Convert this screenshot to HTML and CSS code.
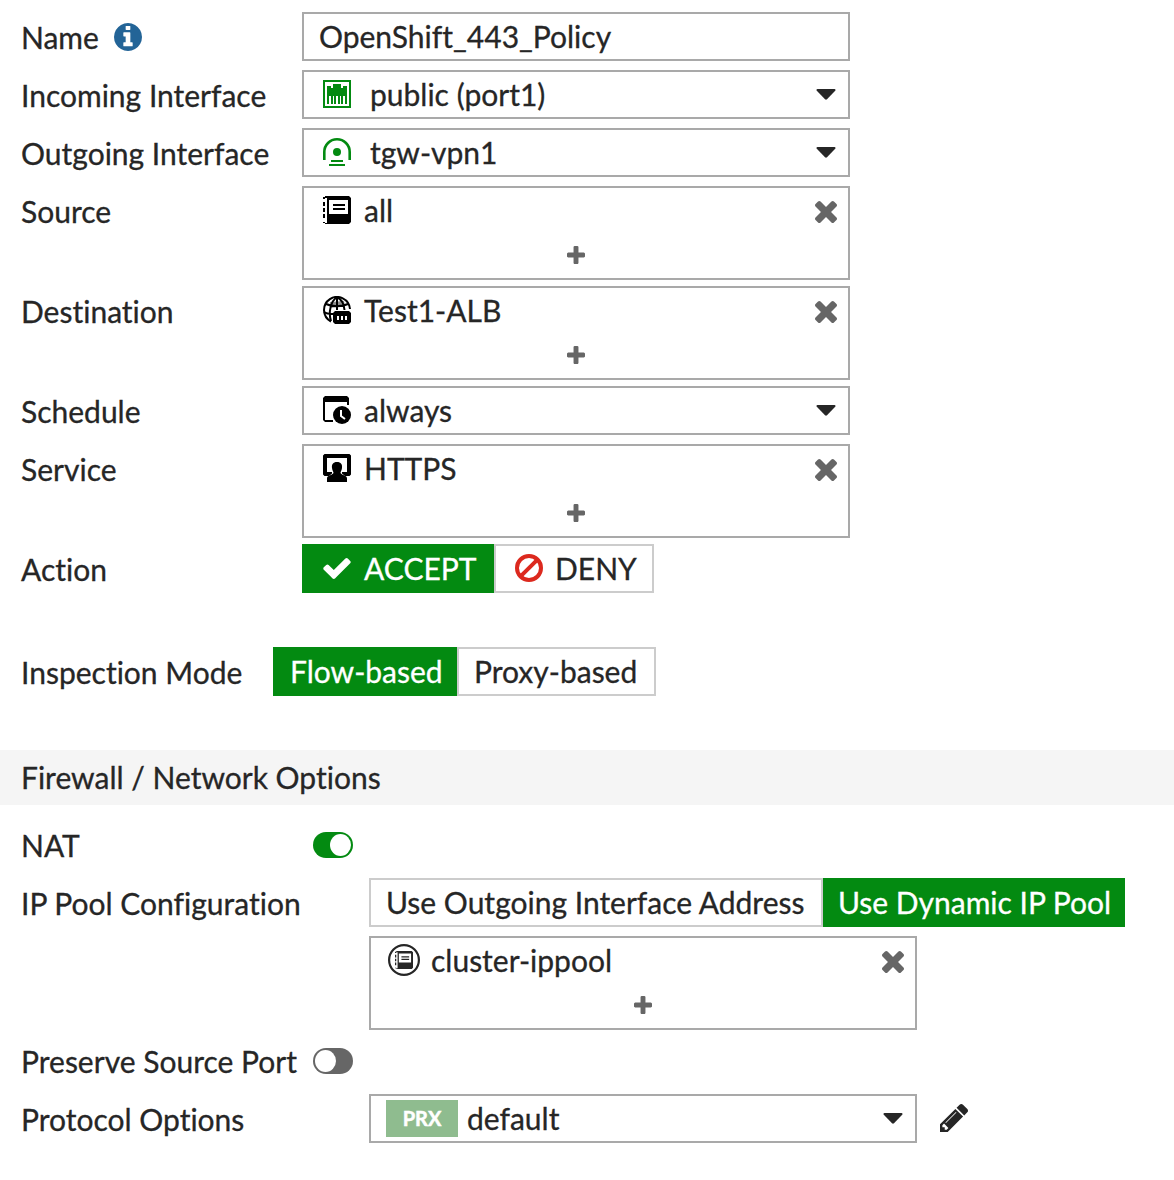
FILE: index.html
```html
<!DOCTYPE html>
<html lang="en">
<head>
<meta charset="utf-8">
<title>Firewall Policy</title>
<link rel="stylesheet" href="styles.css">
</head>
<body>
<svg class="sprite" aria-hidden="true">
  <symbol id="times" viewBox="302 366 1188 1188"><path d="M1490 1322q0 40-28 68l-136 136q-28 28-68 28t-68-28l-294-294-294 294q-28 28-68 28t-68-28l-136-136q-28-28-28-68t28-68l294-294-294-294q-28-28-28-68t28-68l136-136q28-28 68-28t68 28l294 294 294-294q28-28 68-28t68 28l136 136q28 28 28 68t-28 68l-294 294 294 294q28 28 28 68z"/></symbol>
  <symbol id="plus" viewBox="192 128 1408 1408"><path d="M1600 736v192q0 40-28 68t-68 28h-416v416q0 40-28 68t-68 28h-192q-40 0-68-28t-28-68v-416h-416q-40 0-68-28t-28-68v-192q0-40 28-68t68-28h416v-416q0-40 28-68t68-28h192q40 0 68 28t28 68v416h416q40 0 68 28t28 68z"/></symbol>
  <symbol id="caret" viewBox="0 0 20 11"><path d="M1.500 0h17q1.600.400.700 1.800L11 10.200q-1 .900-2 0L.800 1.800Q-.100.400 1.500 0z"/></symbol>
  <symbol id="book" viewBox="0 0 28 28"><path fill-rule="evenodd" d="M2 0h24l2 2v24l-2 2H2v-1H0v-1h2v1h2V2H2v1H0V1h2zM6 4v14h19V4z"/><path d="M0 6h2v4H0zM0 12h2v4H0zM0 18h2v4H0zM10 8h12v2H10zM10 12h12v2H10z"/></symbol>
</svg>
<main class="form">
  <div class="row">
    <div class="label">Name <svg class="info" viewBox="128 128 1536 1536"><path d="M1152 1376v-160q0-14-9-23t-23-9h-96v-512q0-14-9-23t-23-9h-320q-14 0-23 9t-9 23v160q0 14 9 23t23 9h96v320h-96q-14 0-23 9t-9 23v160q0 14 9 23t23 9h448q14 0 23-9t9-23zm-128-896v-160q0-14-9-23t-23-9h-192q-14 0-23 9t-9 23v160q0 14 9 23t23 9h192q14 0 23-9t9-23zm640 416q0 209-103 385.500t-279.500 279.500-385.500 103-385.500-103-279.500-279.500-103-385.500 103-385.500 279.500-279.500 385.500-103 385.500 103 279.500 279.500 103 385.500z"/></svg></div>
    <div class="field plain">OpenShift_443_Policy</div>
  </div>
  <div class="row">
    <div class="label">Incoming Interface</div>
    <div class="field iface">
      <svg class="icon green" viewBox="0 0 28 28"><path fill-rule="evenodd" d="M0 0h28v28H0zM2 2v24h24V2z"/><path d="M4 6h4v2h2V4h8v4h2V6h4v10H4zM4 16h2v8H4zM8 16h2v8H8zM11 16h2v8h-2zM15 16h2v8h-2zM18 16h2v8h-2zM22 16h2v8h-2z"/></svg>
      <span>public (port1)</span><svg class="caret"><use href="#caret"/></svg>
    </div>
  </div>
  <div class="row">
    <div class="label">Outgoing Interface</div>
    <div class="field iface">
      <svg class="icon green" viewBox="0 0 28 28"><path fill="none" stroke="currentColor" stroke-width="2.600" d="M1.300 22v-8a12.700 12.700 0 0 1 25.400 0v8"/><path d="M8 22h12v2H8zM6 26h16v2H6z"/><circle cx="14" cy="14" r="4"/></svg>
      <span>tgw-vpn1</span><svg class="caret"><use href="#caret"/></svg>
    </div>
  </div>
  <div class="row tall">
    <div class="label">Source</div>
    <div class="field multi">
      <div class="entry"><svg class="icon"><use href="#book"/></svg><span>all</span><svg class="times"><use href="#times"/></svg></div>
      <svg class="plus"><use href="#plus"/></svg>
    </div>
  </div>
  <div class="row tall">
    <div class="label">Destination</div>
    <div class="field multi">
      <div class="entry">
        <svg class="icon" viewBox="0 0 28 28"><g fill="none" stroke="currentColor" stroke-width="2"><path d="M8 25.500A13 13 0 1 1 27 13"/><path d="M8 25C5 16 8 5 14 1M14 1c4 2 7 7 7.500 13M14 1v13M3 8c6 3 16 3 22 0M1 16c2 1.500 5 2 9 2"/></g><path d="M7 6l14-1 1 5-15 2z" opacity=".45"/><path fill-rule="evenodd" d="M12 15h14l2 2v9l-2 2H12l-2-2v-9zM14 20v4h2v-4zm4 0v4h2v-4zm4 0v4h2v-4z"/></svg>
        <span>Test1-ALB</span><svg class="times"><use href="#times"/></svg>
      </div>
      <svg class="plus"><use href="#plus"/></svg>
    </div>
  </div>
  <div class="row">
    <div class="label">Schedule</div>
    <div class="field">
      <svg class="icon" viewBox="0 0 28 28"><path d="M2 0h22l2 2v7h-2V6H2v18h8v2H2l-2-2V2z"/><circle cx="19" cy="19" r="9"/><path fill="none" stroke="#fff" stroke-width="2" d="M18 14v6l4 3"/></svg>
      <span>always</span><svg class="caret"><use href="#caret"/></svg>
    </div>
  </div>
  <div class="row tall">
    <div class="label">Service</div>
    <div class="field multi">
      <div class="entry">
        <svg class="icon" viewBox="0 0 28 28"><path d="M1.500 0h25L28 1.500v19L26.500 22H22l-3-2.500V18h5V4H4v14h5v1.500L6 22H1.500L0 20.500v-19z"/><path d="M14 8c4 0 5.500 2.500 5 6-.300 2.500-1.500 3.500-1.500 5 1.500 2.500 6.500 2 6.500 5.500V28H4v-3.500C4 21 9 21.500 10.500 19c0-1.500-1.200-2.500-1.500-5-.500-3.500 1-6 5-6z"/></svg>
        <span>HTTPS</span><svg class="times"><use href="#times"/></svg>
      </div>
      <svg class="plus"><use href="#plus"/></svg>
    </div>
  </div>
  <div class="row action">
    <div class="label">Action</div>
    <div class="toggle-group">
      <div class="option on accept"><svg class="check" viewBox="121 334 1550 1188"><path d="M1671 566q0 40-28 68l-724 724-136 136q-28 28-68 28t-68-28l-136-136-362-362q-28-28-28-68t28-68l136-136q28-28 68-28t68 28l294 295 656-657q28-28 68-28t68 28l136 136q28 28 28 68z"/></svg>ACCEPT</div>
      <div class="option deny"><svg class="ban" viewBox="0 0 28 28"><circle cx="14" cy="14" r="12"/><path d="M5.800 22.200L22.200 5.800"/></svg>DENY</div>
    </div>
  </div>
  <div class="row inspection">
    <div class="label narrow">Inspection Mode</div>
    <div class="toggle-group">
      <div class="option on flow">Flow-based</div>
      <div class="option proxy">Proxy-based</div>
    </div>
  </div>
</main>
<h2 class="section">Firewall / Network Options</h2>
<section class="form options">
  <div class="row">
    <div class="label switch-label">NAT</div>
    <div class="switch checked"></div>
  </div>
  <div class="row">
    <div class="label wide">IP Pool Configuration</div>
    <div class="toggle-group">
      <div class="option outgoing">Use Outgoing Interface Address</div>
      <div class="option on dynamic">Use Dynamic IP Pool</div>
    </div>
  </div>
  <div class="row tall">
    <div class="label wide"></div>
    <div class="field multi">
      <div class="entry pool">
        <svg class="pool-icon" viewBox="0 0 32 32"><circle cx="16" cy="16" r="14.900"/><svg x="7" y="7" width="18" height="18"><use href="#book"/></svg></svg>
        <span>cluster-ippool</span><svg class="times"><use href="#times"/></svg>
      </div>
      <svg class="plus"><use href="#plus"/></svg>
    </div>
  </div>
  <div class="row">
    <div class="label switch-label">Preserve Source Port</div>
    <div class="switch"></div>
  </div>
  <div class="row">
    <div class="label wide">Protocol Options</div>
    <div class="field proto"><b class="badge">PRX</b><span>default</span><svg class="caret"><use href="#caret"/></svg></div>
    <svg class="pencil" viewBox="128 149 1515 1515"><path d="M491 1536l91-91-235-235-91 91v107h128v128h107zm523-928q0-22-22-22-10 0-17 7l-542 542q-7 7-7 17 0 22 22 22 10 0 17-7l542-542q7-7 7-17zm-54-192l416 416-832 832h-416v-416zm683 96q0 53-37 90l-166 166-416-416 166-165q36-38 90-38 53 0 91 38l235 234q37 39 37 91z"/></svg>
  </div>
</section>
</body>
</html>
```
FILE: styles.css
```css
* { box-sizing: border-box; }
body {
  margin: 0;
  background: #fff;
  color: #262626;
  font: 30px/45px Lato, sans-serif;
  font-variant-ligatures: none;
  text-rendering: optimizeLegibility;
  -webkit-text-stroke: 0.3px currentColor;
  white-space: nowrap;
}
svg { display: block; flex: none; fill: currentColor; }
.sprite { position: absolute; width: 0; height: 0; }
.form { padding-top: 12px; }
.row { display: flex; align-items: flex-start; height: 58px; }
.row.tall { height: 100px; }
.row.action { height: 103px; }
.row.inspection { height: 103px; }
.label {
  display: flex;
  flex: none;
  width: 302px;
  padding: 3px 0 0 21px;
}
.label.narrow { width: 273px; }
.label.wide { width: 369px; }
.label.switch-label { width: 313px; }
.info { width: 28px; height: 28px; margin: 8px 0 0 15px; color: #236497; }

.field {
  display: flex;
  flex: none;
  width: 548px;
  height: 49px;
  padding: 0 12px 0 19px;
  border: 2px solid #a9a9a9;
  line-height: 45px;
}
.field.plain { padding-left: 15px; }
.field span { flex: 1; margin-left: 13px; }
.field.iface span { margin-left: 19px; }
.icon { width: 28px; height: 28px; margin-top: 8px; color: #000; }
.icon.green { color: #038a11; }
.caret { width: 20px; height: 11px; margin-top: 17px; }

.field.multi { flex-direction: column; height: 94px; padding: 0; }
.entry { display: flex; height: 47px; padding: 0 11px 0 19px; }
.times { width: 22px; height: 22px; margin-top: 13px; color: #666; }
.plus { width: 18px; height: 18px; margin: 11px auto 0 263px; color: #666; }
.entry.pool { padding-left: 17px; }
.entry.pool span { margin-left: 11px; }
.pool-icon { width: 32px; height: 32px; margin-top: 6px; }
.pool-icon circle { fill: none; stroke: currentColor; stroke-width: 2.2; }

.toggle-group { display: flex; }
.option {
  display: flex;
  height: 49px;
  padding-left: 15px;
  border: 2px solid #ccc;
  line-height: 45px;
}
.option.on { border-color: #038a11; background: #038a11; color: #fff; }
.accept { width: 192px; padding-left: 19px; }
.deny { width: 160px; padding-left: 19px; }
.flow { width: 184px; }
.proxy { width: 199px; }
.outgoing { width: 454px; }
.dynamic { width: 302px; padding-left: 13px; }
.check { width: 28px; height: 21px; margin: 12px 13px 0 0; }
.ban { width: 28px; height: 28px; margin: 8px 12px 0 0; fill: none; stroke: #dc291e; stroke-width: 4; }

.section {
  height: 55px;
  margin: 0;
  padding-left: 21px;
  background: #f5f5f5;
  font-size: 30px;
  font-weight: 400;
  line-height: 55px;
}
.options { padding-top: 15px; }
.switch {
  display: flex;
  width: 40px;
  height: 26px;
  margin-top: 12px;
  padding: 2px;
  border-radius: 13px;
  background: #666;
}
.switch::before { content: ""; width: 21px; height: 22px; border-radius: 50%; background: #fff; }
.switch.checked { justify-content: flex-end; background: #038a11; }

.field.proto { padding-left: 15px; }
.field.proto span { margin-left: 9px; }
.badge {
  width: 72px;
  height: 37px;
  margin-top: 4px;
  background: #8fbc8f;
  color: #fff;
  font-size: 20px;
  line-height: 37px;
  text-align: center;
  -webkit-text-stroke-width: 0.5px;
}
.pencil { width: 28px; height: 28px; margin: 10px 0 0 23px; }
```
